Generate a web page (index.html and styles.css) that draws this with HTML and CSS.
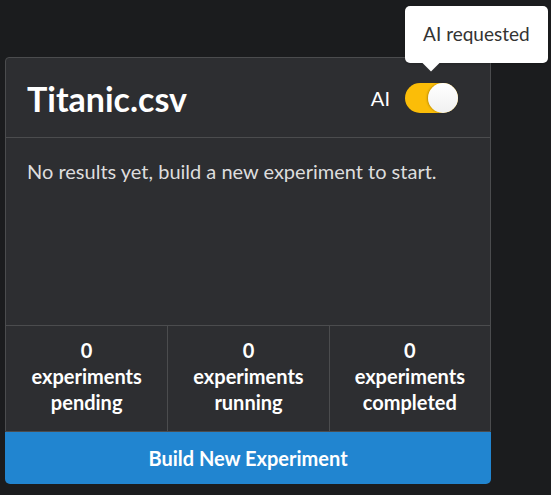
FILE: index.html
```html
<!DOCTYPE html>
<html>
<head>
<meta charset="utf-8">
<link rel="stylesheet" href="styles.css">
</head>
<body>
<div class="page">
  <div class="card">
    <div class="box">
      <div class="header">
        <h1 class="title">Titanic.csv</h1>
        <div class="ai">
          <span class="ai-label">AI</span>
          <span class="toggle"><span class="knob"></span></span>
          <div class="tooltip">AI requested</div>
        </div>
      </div>
      <div class="content">No results yet, build a new experiment to start.</div>
      <div class="stats">
        <div class="stat">0<br>experiments<br>pending</div>
        <div class="stat">0<br>experiments<br>running</div>
        <div class="stat">0<br>experiments<br>completed</div>
      </div>
    </div>
    <button class="build">Build New Experiment</button>
  </div>
</div>
</body>
</html>
```

FILE: styles.css
```css
html, body {
  margin: 0;
  padding: 0;
  background: #1b1c1e;
  font-family: Lato, "Liberation Sans", sans-serif;
}
.page {
  padding: 57px 0 0 5px;
}
.card {
  width: 486px;
}
.box {
  background: #2d2e31;
  border: 1px solid #4b4c4e;
  border-radius: 4px 4px 0 0;
}
.header {
  height: 79px;
  padding: 0 32px 0 21px;
  display: flex;
  align-items: center;
  justify-content: space-between;
  border-bottom: 1px solid #4b4c4e;
}
.title {
  margin: 0;
  color: #ffffff;
  font-size: 34px;
  font-weight: 700;
  line-height: 1;
  position: relative;
  top: 1px;
}
.ai {
  position: relative;
  display: flex;
  align-items: center;
  gap: 15px;
}
.ai-label {
  color: #ffffff;
  font-size: 20px;
}
.toggle {
  display: block;
  width: 53px;
  height: 30px;
  border-radius: 15px;
  background: #fbbd08;
  position: relative;
}
.knob {
  position: absolute;
  right: 0;
  top: 0;
  width: 30px;
  height: 30px;
  border-radius: 50%;
  background: linear-gradient(#ffffff, #f0f0f0);
  box-shadow: -1px 0 2px rgba(0,0,0,0.25);
}
.tooltip {
  position: absolute;
  left: 34px;
  top: -77px;
  width: 143px;
  height: 57px;
  box-sizing: border-box;
  padding-bottom: 2px;
  background: #ffffff;
  border-radius: 5px;
  color: #333333;
  font-size: 19px;
  display: flex;
  align-items: center;
  justify-content: center;
  box-shadow: 0 1px 3px rgba(0,0,0,0.2);
}
.tooltip::after {
  content: "";
  position: absolute;
  left: 20px;
  bottom: -6px;
  width: 12px;
  height: 12px;
  background: #ffffff;
  transform: rotate(45deg);
}
.content {
  height: 188px;
  box-sizing: border-box;
  padding: 19px 21px;
  color: #dddddd;
  font-size: 20px;
  line-height: 28px;
  border-bottom: 1px solid #4b4c4e;
}
.stats {
  display: grid;
  grid-template-columns: 1fr 1fr 1fr;
}
.stat {
  height: 105px;
  box-sizing: border-box;
  padding-top: 11px;
  text-align: center;
  color: #ffffff;
  font-size: 20px;
  font-weight: 700;
  line-height: 26px;
}
.stat + .stat {
  border-left: 1px solid #4b4c4e;
}
.build {
  display: block;
  width: 100%;
  height: 52px;
  border: 0;
  margin: 0;
  background: #2185d0;
  color: #ffffff;
  font-family: Lato, "Liberation Sans", sans-serif;
  font-size: 20px;
  font-weight: 700;
  border-radius: 0 0 5px 5px;
}
```
